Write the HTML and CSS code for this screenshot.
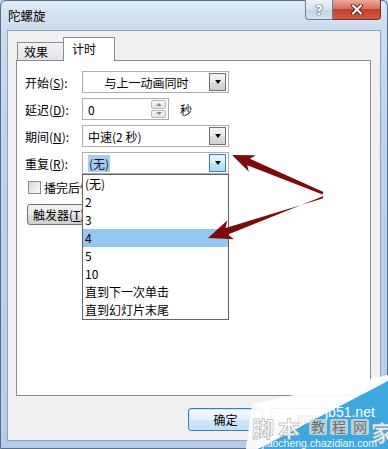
FILE: index.html
```html
<!DOCTYPE html>
<html lang="zh-CN">
<head>
  <meta charset="UTF-8" />
  <title>陀螺旋</title>
  <link rel="stylesheet" href="styles.css">
</head>
<body>

  <div class="window">
    <div class="titlebar">
      <span class="title">陀螺旋</span>
      <div class="caption">
        <div class="cap-btn help">?</div>
        <div class="cap-btn close">
          <svg width="14" height="11" viewBox="0 0 14 11">
            <path d="M3 1.5 L11 9.5 M11 1.5 L3 9.5" stroke="#5b1d14" stroke-width="4" stroke-linecap="round"/>
            <path d="M3 1.5 L11 9.5 M11 1.5 L3 9.5" stroke="#fff" stroke-width="2.2" stroke-linecap="round"/>
          </svg>
        </div>
      </div>
    </div>

    <div class="client">
      <div class="tabs">
        <div class="tab">效果</div>
        <div class="tab active">计时</div>
      </div>

      <div class="panel">
        <div class="form">
          <label>开始(<u>S</u>):</label>
          <div class="select">
            <span class="value center">与上一动画同时</span>
            <span class="drop"></span>
          </div>

          <label>延迟(<u>D</u>):</label>
          <div class="field-line">
            <div class="spin">
              <span class="value">0</span>
              <span class="spin-btns"><span class="up"></span><span class="down"></span></span>
            </div>
            <span class="unit">秒</span>
          </div>

          <label>期间(<u>N</u>):</label>
          <div class="select">
            <span class="value">中速(2 秒)</span>
            <span class="drop"></span>
          </div>

          <label>重复(<u>R</u>):</label>
          <div class="select focus">
            <span class="value"><span class="hl">(无)</span></span>
            <span class="drop"></span>
            <ul class="list">
              <li>(无)</li>
              <li>2</li>
              <li>3</li>
              <li class="sel">4</li>
              <li>5</li>
              <li>10</li>
              <li>直到下一次单击</li>
              <li>直到幻灯片末尾</li>
            </ul>
          </div>
        </div>

        <div class="check"><span class="box"></span>播完后快退(<u>W</u>)</div>
        <div class="trigger">触发器(<u>T</u>) ▾</div>
      </div>

      <div class="dlg-btns">
        <button class="btn default">确定</button>
        <button class="btn">取消</button>
      </div>
    </div>
  </div>

  <!-- red arrows drawn over the screenshot -->
  <svg class="overlay" width="388" height="449" viewBox="0 0 388 449">
    <polygon fill="#7c0b0b" points="232,155 255.8,155.2 249.9,158.7 323.5,192 322.5,194.5 247.3,165.2 248.8,171.8"/>
    <polygon fill="#7c0b0b" points="208,238 234,239.2 228,234.5 323.5,196 322.5,198.5 225.6,227.9 227.2,220.4"/>
  </svg>

  <!-- site watermark, bottom right -->
  <svg class="overlay" width="388" height="449" viewBox="0 0 388 449">
    <polygon fill="#ffffff" fill-opacity="0.92" points="246,449 252,404 388,375 388,381 258,449"/>
    <polygon fill="#3da8dd" points="258,449 388,381 388,449"/>
    <text x="325" y="417" class="wm-site">jb51.net</text>
    <rect x="309" y="419" width="18" height="16" rx="2" fill="#d8d8d8" fill-opacity="0.8"/>
    <rect x="330" y="419" width="18" height="16" rx="2" fill="#d8d8d8" fill-opacity="0.8"/>
    <rect x="351" y="419" width="18" height="16" rx="2" fill="#d8d8d8" fill-opacity="0.8"/>
    <text x="311" y="432" class="wm-box">教</text>
    <text x="332" y="432" class="wm-box">程</text>
    <text x="353" y="432" class="wm-box">网</text>
    <text x="252" y="437" class="wm-big">脚本</text>
    <text x="371" y="441" class="wm-big">家</text>
    <text x="262" y="447" class="wm-url">jiaocheng.chazidian.com</text>
  </svg>

</body>
</html>
```

FILE: styles.css
```css
* {
  box-sizing: border-box;
}

body {
  margin: 0;
  width: 388px;
  height: 449px;
  overflow: hidden;
  position: relative;
  font-family: "Noto Sans CJK SC", "Microsoft YaHei", sans-serif;
  font-size: 12px;
  color: #000;
  background: #b9d1ea;
}

u {
  text-decoration: underline;
  text-underline-offset: 1px;
}

.window {
  height: 449px;
  border: 1px solid #5a6f8c;
  border-radius: 6px 6px 0 0;
  background: linear-gradient(to bottom, #dde9f6 0, #cbdcef 30px, #bdd3eb 140px, #b6cde8 100%);
  display: flex;
  flex-direction: column;
}

.titlebar {
  height: 29px;
  display: flex;
  justify-content: space-between;
  padding-left: 7px;
}

.title {
  line-height: 29px;
  font-size: 12.5px;
}

.caption {
  display: flex;
  height: 20px;
  margin: -1px 6px 0 0;
}

.cap-btn {
  height: 20px;
  border: 1px solid #6b7c94;
  border-top: none;
  display: flex;
  align-items: center;
  justify-content: center;
}

.help {
  width: 28px;
  border-radius: 0 0 0 4px;
  background: linear-gradient(#eef3f9, #d6e1ee 50%, #c4d3e6 51%, #d3e0ef);
  color: #fff;
  font: bold 14px "DejaVu Sans", sans-serif;
  text-shadow: 0 0 1px #3b4a60, 0 0 1px #3b4a60, 0 0 1px #3b4a60;
}

.close {
  width: 48px;
  border-left: none;
  border-color: #7a2a20;
  border-radius: 0 0 4px 0;
  background: linear-gradient(#eaa99d, #d6735f 45%, #c2402b 50%, #cf5c45);
}

.client {
  flex: 1;
  margin: 0 6px 7px;
  border: 1px solid #8aa3c2;
  background: #f0f0f0;
  padding: 6px 9px 0 8px;
  display: flex;
  flex-direction: column;
}

.tabs {
  display: flex;
  align-items: flex-end;
  height: 23px;
  padding-left: 1px;
}

.tab {
  width: 46px;
  height: 18px;
  padding-left: 6px;
  line-height: 17px;
  border: 1px solid #898c95;
  border-bottom: none;
  border-right: none;
  background: linear-gradient(#f3f3f3, #e4e4e4);
}

.tab.active {
  width: 52px;
  height: 24px;
  padding-left: 8px;
  line-height: 22px;
  border-right: 1px solid #898c95;
  background: #fff;
  margin-bottom: -1px;
  position: relative;
  z-index: 1;
}

.panel {
  height: 336px;
  border: 1px solid #898c95;
  background: #fff;
  padding: 10px 0 0 8px;
}

.form {
  display: grid;
  grid-template-columns: 57px 147px;
  grid-auto-rows: 22px;
  row-gap: 5px;
  align-items: center;
}

.select {
  height: 22px;
  border: 1px solid #abadb3;
  display: flex;
  align-items: center;
  padding: 1px;
  position: relative;
  background: #fff;
}

.value {
  flex: 1;
  padding-left: 4px;
  white-space: nowrap;
}

.value.center {
  text-align: center;
  padding-left: 0;
}

.drop {
  width: 17px;
  height: 18px;
  margin-right: 1px;
  border: 1px solid #707070;
  background: linear-gradient(#f2f2f2, #ebebeb 50%, #dddddd 51%, #cfcfcf);
  display: flex;
  align-items: center;
  justify-content: center;
}

.drop::after {
  content: "";
  border-left: 3.5px solid transparent;
  border-right: 3.5px solid transparent;
  border-top: 4px solid #000;
}

.select.focus .drop {
  border-color: #3c7fb1;
  background: linear-gradient(#eaf6fd, #d9f0fc 50%, #bee6fd 51%, #a7d9f5);
}

.hl {
  background: #a6cdf3;
  color: #10183a;
  padding: 0 1px;
}

.field-line {
  display: flex;
  align-items: center;
}

.spin {
  width: 87px;
  height: 22px;
  border: 1px solid #abadb3;
  display: flex;
  align-items: center;
  padding: 1px 2px 1px 1px;
}

.spin-btns {
  width: 15px;
  height: 18px;
  display: flex;
  flex-direction: column;
  gap: 1px;
}

.spin-btns span {
  flex: 1;
  border: 1px solid #b7b7b7;
  border-radius: 2px;
  background: linear-gradient(#f7f7f7, #e4e4e4);
  display: flex;
  align-items: center;
  justify-content: center;
}

.up::after {
  content: "";
  border-left: 3px solid transparent;
  border-right: 3px solid transparent;
  border-bottom: 3px solid #8a8a8a;
}

.down::after {
  content: "";
  border-left: 3px solid transparent;
  border-right: 3px solid transparent;
  border-top: 3px solid #8a8a8a;
}

.unit {
  margin-left: 11px;
}

.list {
  position: absolute;
  top: calc(100% + 1px);
  left: -1px;
  width: 147px;
  margin: 0;
  padding: 0;
  list-style: none;
  border: 1px solid #646464;
  background: #fff;
  z-index: 5;
}

.list li {
  height: 18px;
  line-height: 18px;
  padding-left: 2px;
}

.list li.sel {
  background: #93c8f5;
}

.check {
  margin-top: 7px;
  height: 13px;
  padding-left: 3px;
  display: flex;
  align-items: center;
  white-space: nowrap;
}

.box {
  width: 13px;
  height: 13px;
  margin-right: 3px;
  border: 1px solid #8e8f8f;
  background: linear-gradient(135deg, #d8d8d8, #fbfbfb);
}

.trigger {
  width: 80px;
  height: 21px;
  margin: 10px 0 0 2px;
  padding-left: 5px;
  line-height: 19px;
  border: 1px solid #707070;
  border-radius: 3px;
  background: linear-gradient(#f2f2f2, #ebebeb 50%, #dddddd 51%, #cfcfcf);
}

.dlg-btns {
  display: flex;
  justify-content: flex-end;
  gap: 8px;
  margin-top: 12px;
  padding-right: 25px;
}

.btn {
  width: 75px;
  height: 23px;
  padding: 0;
  font: inherit;
  border: 1px solid #707070;
  border-radius: 3px;
  background: linear-gradient(#f2f2f2, #ebebeb 50%, #dddddd 51%, #cfcfcf);
}

.btn.default {
  border-color: #3c7fb1;
  box-shadow: inset 0 0 0 1px #bfe6fb;
  background: linear-gradient(#f3f9fd, #e3f1fb 50%, #cfe7f9 51%, #c0e0f7);
}

.overlay {
  position: absolute;
  left: 0;
  top: 0;
  z-index: 10;
  pointer-events: none;
}

.wm-site {
  font: 14px "Liberation Sans", sans-serif;
  fill: #fff;
}

.wm-box {
  font: 14px "Noto Sans CJK SC", sans-serif;
  fill: #6f6f6f;
}

.wm-big {
  font: bold 22px "Noto Sans CJK SC", sans-serif;
  fill: #fff;
  fill-opacity: 0.85;
  stroke: #9a9a9a;
  stroke-width: 0.5;
  letter-spacing: 4px;
}

.wm-url {
  font: 10.5px "Liberation Sans", sans-serif;
  fill: #f2f8fc;
}
```
